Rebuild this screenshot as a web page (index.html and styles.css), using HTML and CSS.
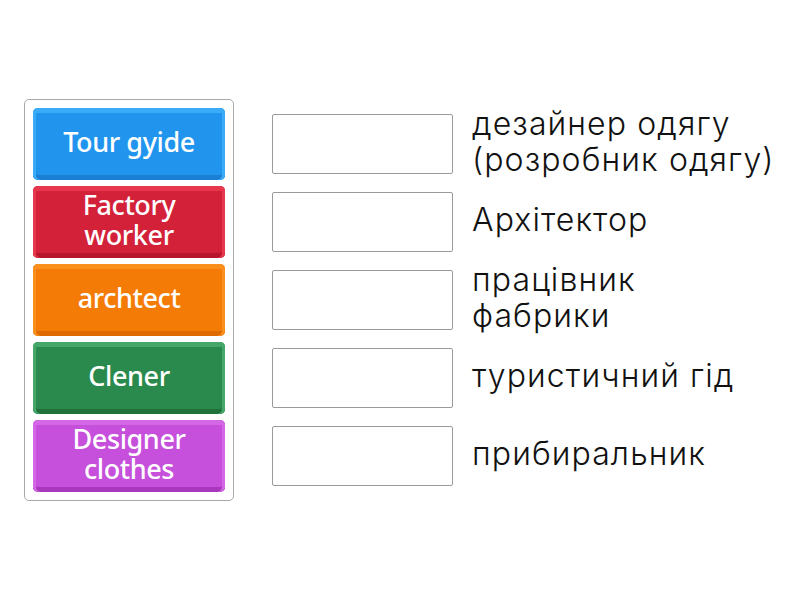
FILE: index.html
```html
<!DOCTYPE html>
<html>
<head>
<meta charset="utf-8">
<link rel="stylesheet" href="styles.css">
</head>
<body>
<div class="page">
  <div class="bank">
    <div class="tile blue">Tour gyide</div>
    <div class="tile red">Factory<br>worker</div>
    <div class="tile orange">archtect</div>
    <div class="tile green">Clener</div>
    <div class="tile purple">Designer<br>clothes</div>
  </div>
  <div class="targets">
    <div class="row"><div class="slot"></div><div class="label">дезайнер одягу<br>(розробник одягу)</div></div>
    <div class="row"><div class="slot"></div><div class="label">Архітектор</div></div>
    <div class="row"><div class="slot"></div><div class="label">працівник<br>фабрики</div></div>
    <div class="row"><div class="slot"></div><div class="label">туристичний гід</div></div>
    <div class="row"><div class="slot"></div><div class="label">прибиральник</div></div>
  </div>
</div>
</body>
</html>
```
FILE: styles.css
```css
html, body { margin: 0; padding: 0; background: #fff; }
.page {
  display: flex;
  align-items: flex-start;
  padding: 99px 0 0 24px;
}
.bank {
  width: 192px;
  padding: 8px;
  border: 1px solid #a9a9a9;
  border-radius: 5px;
  display: flex;
  flex-direction: column;
  gap: 6px;
}
.tile {
  height: 72px;
  border-radius: 5px;
  display: flex;
  align-items: center;
  justify-content: center;
  text-align: center;
  color: #fff;
  font-family: "Noto Sans", "Open Sans", sans-serif;
  font-weight: 500;
  font-size: 27px;
  line-height: 30px;
  letter-spacing: -0.4px;
  box-sizing: border-box;
  padding-bottom: 5px;
}
.blue { background: #2195ee; box-shadow: inset 0 5px 0 #3aabf6, inset 3px 0 0 #3aabf6, inset -3px 0 0 #3aabf6, inset 0 -5px 0 #1a7fd2; }
.red { background: #d4213a; box-shadow: inset 0 5px 0 #e6374c, inset 3px 0 0 #e6374c, inset -3px 0 0 #e6374c, inset 0 -5px 0 #b8142b; }
.orange { background: #f47b05; box-shadow: inset 0 5px 0 #fb8f1e, inset 3px 0 0 #fb8f1e, inset -3px 0 0 #fb8f1e, inset 0 -5px 0 #dd6a00; }
.green { background: #2a8a4d; box-shadow: inset 0 5px 0 #45a86a, inset 3px 0 0 #45a86a, inset -3px 0 0 #45a86a, inset 0 -5px 0 #1f7039; }
.purple { background: #c650db; box-shadow: inset 0 5px 0 #d467e6, inset 3px 0 0 #d467e6, inset -3px 0 0 #d467e6, inset 0 -5px 0 #a838bb; }
.targets {
  margin-left: 38px;
  padding-top: 15px;
  display: flex;
  flex-direction: column;
  gap: 18px;
}
.row {
  display: flex;
  align-items: center;
  height: 60px;
}
.slot {
  width: 179px;
  height: 58px;
  border: 1px solid #9a9a9a;
  border-radius: 2px;
  flex: none;
}
.label {
  margin-left: 19px;
  margin-top: -4px;
  font-family: "Inter", "Roboto", sans-serif;
  font-weight: 300;
  font-size: 32px;
  line-height: 36px;
  letter-spacing: 1.1px;
  color: #111;
  white-space: nowrap;
}
```
